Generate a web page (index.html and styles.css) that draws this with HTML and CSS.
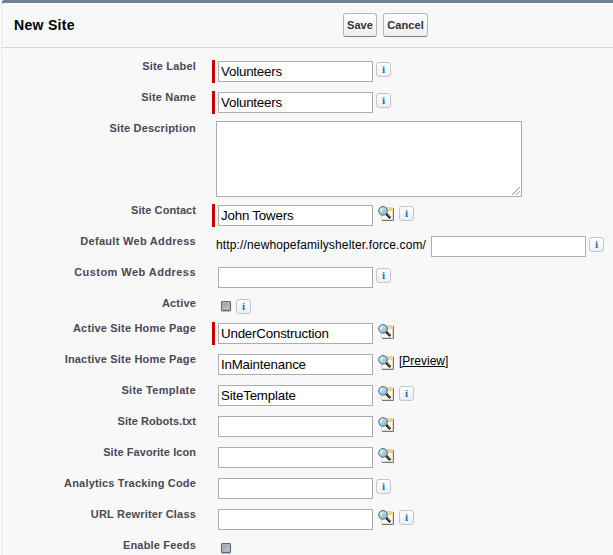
FILE: index.html
```
<!DOCTYPE html>
<html lang="en">
<head>
<meta charset="utf-8">
<title>New Site</title>
<link rel="stylesheet" href="styles.css">
</head>
<body>
<svg width="0" height="0" class="defs" aria-hidden="true">
  <defs>
    <linearGradient id="lens" x1="0" y1="0" x2="1" y2="1"><stop offset="0" stop-color="#d3eef8"/><stop offset="1" stop-color="#73b5dc"/></linearGradient>
    <symbol id="lookup" viewBox="0 0 16 16">
      <path d="M4 1h11v13H4z" fill="#fffdf8"/>
      <path d="M9 2h5v3H9z" fill="#ffd06b"/>
      <path d="M3.5 10v4M4 1.5h11" stroke="#d8d3c8" fill="none"/>
      <path d="M15.5 2v12.5H4" stroke="#777" fill="none"/>
      <path d="M14.5 2v11.5H4" stroke="#e0d8c8" fill="none"/>
      <path d="M8.2 7.8l4.2 4.2" stroke="#222" stroke-width="2.6"/>
      <path d="M9.8 8.6l2.6 2.6" stroke="#c09366" stroke-width="1"/>
      <circle cx="5" cy="4.9" r="4.3" fill="url(#lens)" stroke="#56646e" stroke-width="1"/>
      <path d="M2.6 5.4q.1-2.2 2.2-2.8" stroke="#fff" fill="none"/>
    </symbol>
  </defs>
</svg>
<main class="panel">
  <header class="header">
    <h1 class="title">New Site</h1>
    <button class="btn save">Save</button>
    <button class="btn cancel">Cancel</button>
  </header>
  <form class="form">
    <div class="row"><label class="label">Site Label</label><div class="field"><i class="bar required"></i><input class="input" value="Volunteers"><span class="info">i</span></div></div>
    <div class="row"><label class="label">Site Name</label><div class="field"><i class="bar required"></i><input class="input" value="Volunteers"><span class="info">i</span></div></div>
    <div class="row tall"><label class="label">Site Description</label><div class="area"><textarea class="textarea"></textarea><svg class="grip" width="8" height="8" viewBox="0 0 8 8"><path d="M.5 7.5l7-7M4.5 7.5l3-3" stroke="#555" stroke-dasharray="1.2 .3"/></svg></div></div>
    <div class="row"><label class="label tight">Site Contact</label><div class="field"><i class="bar required"></i><input class="input" value="John Towers"><svg class="lookup"><use href="#lookup"/></svg><span class="info">i</span></div></div>
    <div class="row"><label class="label loose">Default Web Address</label><div class="field"><span class="url">http://newhopefamilyshelter.force.com/</span><input class="input"><span class="info">i</span></div></div>
    <div class="row"><label class="label looser">Custom Web Address</label><div class="field"><i class="bar"></i><input class="input"><span class="info">i</span></div></div>
    <div class="row short"><label class="label">Active</label><div class="field"><span class="check"></span><span class="info">i</span></div></div>
    <div class="row"><label class="label">Active Site Home Page</label><div class="field"><i class="bar required"></i><input class="input" value="UnderConstruction"><svg class="lookup"><use href="#lookup"/></svg></div></div>
    <div class="row"><label class="label">Inactive Site Home Page</label><div class="field"><i class="bar"></i><input class="input" value="InMaintenance"><svg class="lookup"><use href="#lookup"/></svg><a class="preview">[Preview]</a></div></div>
    <div class="row"><label class="label loose">Site Template</label><div class="field"><i class="bar"></i><input class="input" value="SiteTemplate"><svg class="lookup"><use href="#lookup"/></svg><span class="info">i</span></div></div>
    <div class="row"><label class="label tight">Site Robots.txt</label><div class="field"><i class="bar"></i><input class="input"><svg class="lookup"><use href="#lookup"/></svg></div></div>
    <div class="row"><label class="label tight">Site Favorite Icon</label><div class="field"><i class="bar"></i><input class="input"><svg class="lookup"><use href="#lookup"/></svg></div></div>
    <div class="row"><label class="label">Analytics Tracking Code</label><div class="field"><i class="bar"></i><input class="input"><span class="info">i</span></div></div>
    <div class="row"><label class="label">URL Rewriter Class</label><div class="field"><i class="bar"></i><input class="input"><svg class="lookup"><use href="#lookup"/></svg><span class="info">i</span></div></div>
    <div class="row"><label class="label">Enable Feeds</label><div class="field"><span class="check"></span></div></div>
  </form>
</main>
</body>
</html>
```
FILE: styles.css
```
* { box-sizing: border-box; }
body { margin: 0; height: 555px; overflow: hidden; background: #fff; font-family: "Liberation Sans", Arial, sans-serif; font-size: 12px; color: #000; }
.defs { display: block; }
.panel { height: 555px; overflow: hidden; margin-left: 1px; border-left: 1px solid #e6e6e8; border-top: 3px solid #747e96; border-top-left-radius: 4px; background: #f8f8f8; }
.header { display: flex; align-items: flex-start; height: 46px; padding-top: 10px; border-bottom: 1px solid #fff; box-shadow: inset 0 -1px #d8d8d8; }
.title { width: 341px; margin: 0; padding: 4px 0 0 12px; font-size: 14px; line-height: 16px; letter-spacing: .3px; }
.btn { height: 24px; margin: 0; padding: 0; border: 1px solid #b5b5b5; border-bottom-color: #7f7f7f; border-radius: 3px; background: linear-gradient(#fff, #efefef); color: #333; font: bold 11px "Liberation Sans", Arial, sans-serif; letter-spacing: .1px; }
.save { width: 34px; }
.cancel { width: 45px; margin-left: 6px; }
.form { padding-top: 7px; }
.row { display: flex; height: 31px; }
.tall { height: 82px; }
.short { height: 25px; }
.label { flex: none; width: 194px; margin-right: 16px; padding-top: 3px; text-align: right; font-size: 11px; font-weight: bold; line-height: 14px; letter-spacing: .18px; color: #4a4a56; }
.tight { letter-spacing: .06px; }
.loose { letter-spacing: .3px; }
.looser { letter-spacing: .45px; }
.field { display: flex; align-items: flex-start; }
.bar { width: 3px; height: 23px; margin: 4px 3px 0 0; }
.required { background: #c00; }
.input { width: 155px; height: 21px; margin: 5px 0 0; padding: 0 2px; border: 1px solid #abadb3; border-radius: 0; outline: 0; background: #fff; font: 13.33px "Liberation Sans", Arial, sans-serif; letter-spacing: -.2px; color: #000; }
.area { position: relative; width: 306px; height: 76px; margin: 3px 0 0 4px; }
.textarea { display: block; width: 306px; height: 76px; padding: 2px; border: 1px solid #abadb3; resize: none; outline: 0; }
.grip { position: absolute; right: 2px; bottom: 2px; }
.info { width: 15px; height: 15px; margin: 6px 0 0 3px; border: 1px solid #c4c6ca; border-radius: 3px; background: linear-gradient(#fff, #eceff3); color: #176bd0; font: bold 11px/13px "Liberation Serif", serif; text-align: center; }
.lookup { width: 16px; height: 16px; margin: 6px 0 0 5px; }
.lookup + .info { margin-left: 5px; }
.url { width: 215px; margin-left: 4px; padding-top: 7px; line-height: 14px; letter-spacing: .14px; }
.check { width: 10px; height: 10px; margin: 8px 0 0 9px; border: 1px solid #62696e; border-radius: 1px; background: linear-gradient(135deg, #89959b, #cbd3d6); box-shadow: inset 0 0 0 1px #aab2b6, 0 1px 1px #bbb; }
.check + .info { margin-left: 5px; }
.preview { margin: 5px 0 0 5px; line-height: 14px; text-decoration: underline; }
```
